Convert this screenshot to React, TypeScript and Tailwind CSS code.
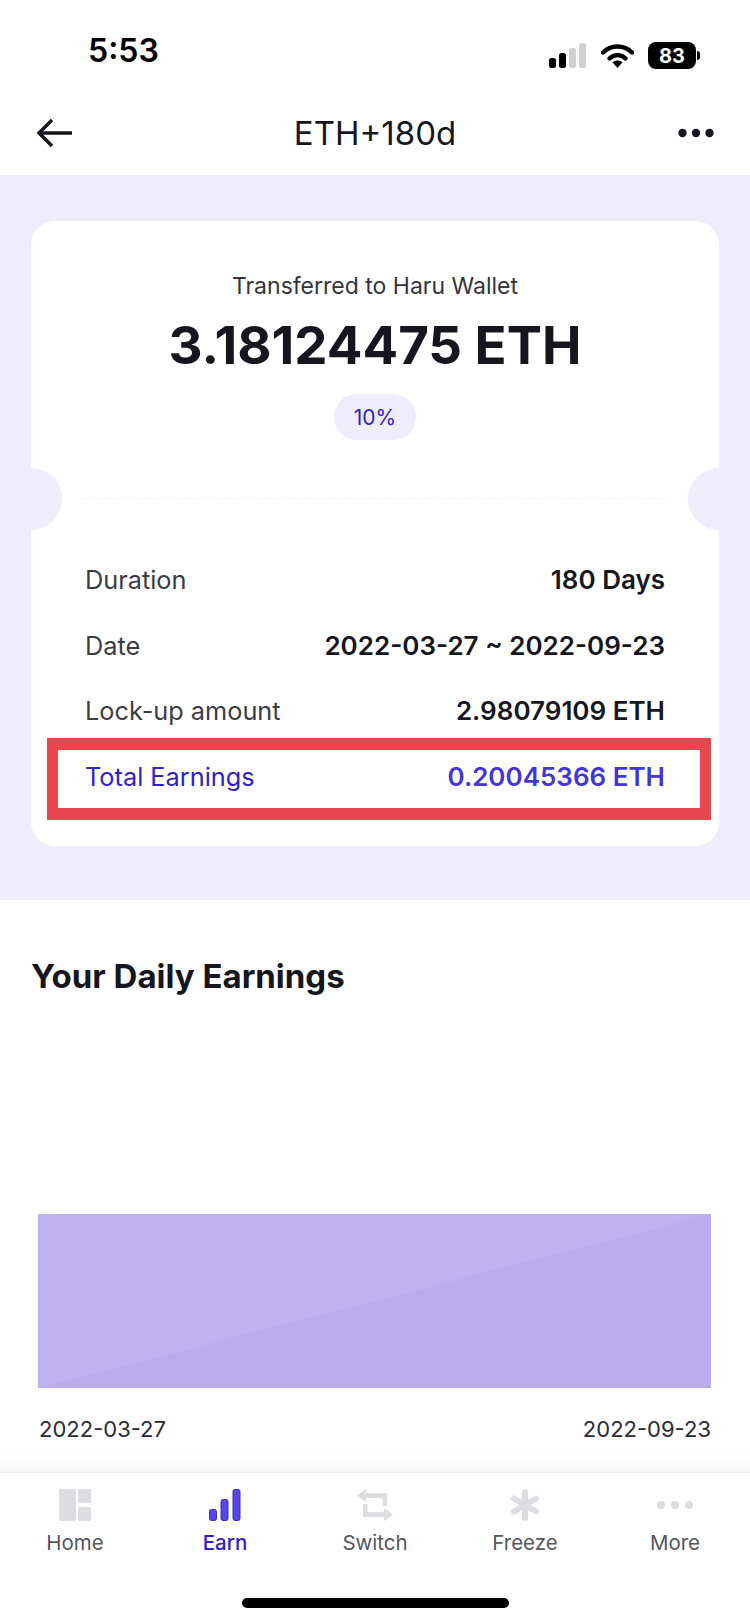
import React from 'react';

const FONT = "font-['Inter','Noto_Sans',sans-serif]";

const rows = [
  { label: 'Duration', value: '180 Days' },
  { label: 'Date', value: '2022-03-27 ~ 2022-09-23' },
  { label: 'Lock-up amount', value: '2.98079109 ETH' },
];

function StatusIcons() {
  return (
    <div className="flex items-center gap-[14px]">
      <svg width="38" height="25" viewBox="0 0 38 25">
        <rect x="0" y="15" width="7" height="10" rx="2.5" fill="#000" />
        <rect x="10" y="10" width="7" height="15" rx="2.5" fill="#000" />
        <rect x="20" y="5" width="7" height="20" rx="2.5" fill="#cfcfcf" />
        <rect x="30" y="0" width="7" height="25" rx="2.5" fill="#cfcfcf" />
      </svg>
      <svg width="33" height="25" viewBox="0 0 33 25" fill="none">
        <path d="M2 9.5C10 1.5 23 1.5 31 9.5" stroke="#000" strokeWidth="4.4" strokeLinecap="round" />
        <path d="M8.5 15.5C13 11 20 11 24.5 15.5" stroke="#000" strokeWidth="4.4" strokeLinecap="round" />
        <path d="M11.5 19.2C14.5 16.8 18.5 16.8 21.5 19.2L16.5 25Z" fill="#000" />
      </svg>
      <div className="flex items-center gap-[1px]">
        <div className="flex h-[27px] w-[48px] items-center justify-center rounded-[8px] bg-black text-[20px] font-bold text-white">83</div>
        <div className="h-[9px] w-[3px] rounded-r-full bg-black" />
      </div>
    </div>
  );
}

function HomeIcon() {
  return (
    <svg width="32" height="32" viewBox="0 0 32 32">
      <rect x="0" y="0" width="17" height="32" rx="1.5" fill="#dcdde1" />
      <rect x="19" y="0" width="13" height="14" rx="1.5" fill="#dcdde1" />
      <rect x="19" y="18" width="13" height="14" rx="1.5" fill="#dcdde1" />
    </svg>
  );
}

function EarnIcon() {
  return (
    <svg width="32" height="32" viewBox="0 0 32 32">
      <rect x="0.5" y="20.5" width="7" height="11" rx="2" fill="#5846e6" stroke="#3a2bd0" />
      <rect x="12" y="10.5" width="7" height="21" rx="2" fill="#5846e6" stroke="#3a2bd0" />
      <rect x="24" y="0.5" width="7" height="31" rx="2" fill="#5846e6" stroke="#3a2bd0" />
    </svg>
  );
}

function SwitchIcon() {
  return (
    <svg width="36" height="32" viewBox="0 0 36 32" fill="#dcdde1">
      <path d="M0 6.5 9 0V4H30V17H25.500V9H9V13Z" />
      <path d="M36 25.500 27 32V28H6V15H10.500V23H27V19Z" />
    </svg>
  );
}

function FreezeIcon() {
  return (
    <svg width="32" height="32" viewBox="0 0 32 32" fill="none" stroke="#dcdde1" strokeWidth="6" strokeLinecap="round">
      <path d="M16 3V29" />
      <path d="M5 9.500 27 22.500" />
      <path d="M27 9.500 5 22.500" />
    </svg>
  );
}

function MoreIcon() {
  return (
    <svg width="36" height="32" viewBox="0 0 36 32" fill="#dcdde1">
      <circle cx="4" cy="16" r="4" />
      <circle cx="18" cy="16" r="4" />
      <circle cx="32" cy="16" r="4" />
    </svg>
  );
}

const tabs = [
  { label: 'Home', icon: <HomeIcon />, active: false },
  { label: 'Earn', icon: <EarnIcon />, active: true },
  { label: 'Switch', icon: <SwitchIcon />, active: false },
  { label: 'Freeze', icon: <FreezeIcon />, active: false },
  { label: 'More', icon: <MoreIcon />, active: false },
];

export default function App() {
  return (
    <div className={`flex h-[1623px] w-[750px] flex-col overflow-hidden bg-white text-[#15161e] ${FONT}`}>
      {/* status bar */}
      <div className="flex h-[90px] items-end justify-between pb-[21px] pl-[88px] pr-[50px]">
        <span className="relative top-[1px] text-[32px] leading-[38px] font-semibold text-black">5:53</span>
        <StatusIcons />
      </div>

      {/* nav */}
      <div className="flex h-[85px] items-center justify-between pl-[36px] pr-[36px]">
        <svg width="36" height="30" viewBox="0 0 36 30" fill="none" stroke="#15161e" strokeWidth="3.500">
          <path d="M16 2 3 15 16 28" />
          <path d="M3 15H36" />
        </svg>
        <h1 className="text-[33px] leading-[40px] font-normal">ETH+180d</h1>
        <svg width="36" height="10" viewBox="0 0 36 10" fill="#15161e">
          <circle cx="4.500" cy="5" r="4.200" />
          <circle cx="18" cy="5" r="4.200" />
          <circle cx="31.500" cy="5" r="4.200" />
        </svg>
      </div>

      {/* ticket */}
      <div className="h-[725px] bg-[#efedfb] px-[31px] pt-[46px]">
        <div className="relative h-[625px] rounded-[24px] bg-white">
          <div className="absolute top-[247px] -left-px h-[62px] w-[32px] rounded-r-full bg-[#efedfb]" />
          <div className="absolute top-[247px] -right-px h-[62px] w-[32px] rounded-l-full bg-[#efedfb]" />

          <div className="flex flex-col items-center pt-[50px]">
            <p className="text-[23px] leading-[30px] text-[#33343c]">Transferred to Haru Wallet</p>
            <p className="mt-[14px] text-[52.800px] leading-[60px] font-bold">3.18124475 ETH</p>
            <span className="mt-[19px] flex h-[46px] w-[82px] items-center justify-center rounded-full bg-[#efedfb] pt-[1px] text-[21px] text-[#2f22c8]">10%</span>
          </div>

          <div className="mx-[53px] mt-[58px] border-t border-dashed border-[#f3f3f6]" />

          <div className="mt-[65px] flex flex-col gap-[33.500px] px-[54px]">
            {rows.map((row) => (
              <div key={row.label} className="flex h-[32px] items-center justify-between">
                <span className="text-[25.300px] leading-[32px] text-[#3b3c44]">{row.label}</span>
                <span className="text-[26px] leading-[32px] font-semibold">{row.value}</span>
              </div>
            ))}
            <div className="relative flex h-[32px] items-center justify-between">
              <span className="text-[25.300px] leading-[32px] text-[#2f22c8]">Total Earnings</span>
              <span className="text-[26px] leading-[32px] font-semibold text-[#4335d8]">0.20045366 ETH</span>
              {/* red highlight drawn over the row */}
              <div className="absolute -top-[23px] -right-[46px] -left-[38px] h-[82px] border-x-[11px] border-y-[12px] border-[#e9474f]" />
            </div>
          </div>
        </div>
      </div>

      {/* daily earnings */}
      <div className="flex flex-1 flex-col">
        <h2 className="mt-[57px] pl-[31px] text-[33px] leading-[38px] font-bold">Your Daily Earnings</h2>
        <div className="mt-[219px] ml-[38px] h-[174px] w-[673px] bg-[#bbaded] [background-image:linear-gradient(165.500deg,#bfb2f1_50%,#bbaded_50%)]" />
        <div className="mt-[26px] flex justify-between pr-[39px] pl-[39px] text-[22px] leading-[30px] text-[#2a2b33]">
          <span>2022-03-27</span>
          <span>2022-09-23</span>
        </div>
      </div>

      {/* tab bar */}
      <div className="h-[22px] bg-gradient-to-b from-white to-[#f8f8fa]" />
      <div className="relative h-[151px] border-t border-[#eeeef2] pt-[16px]">
        <div className="grid grid-cols-5">
          {tabs.map((tab) => (
            <div key={tab.label} className="flex flex-col items-center">
              <div className="flex h-[32px] items-center justify-center">{tab.icon}</div>
              <span className={`mt-[8px] text-[20.500px] leading-[28px] ${tab.active ? 'font-medium text-[#2f22c8]' : 'text-[#55565e]'}`}>{tab.label}</span>
            </div>
          ))}
        </div>
        <div className="mx-auto mt-[41px] h-[10px] w-[267px] rounded-full bg-black" />
      </div>
    </div>
  );
}
